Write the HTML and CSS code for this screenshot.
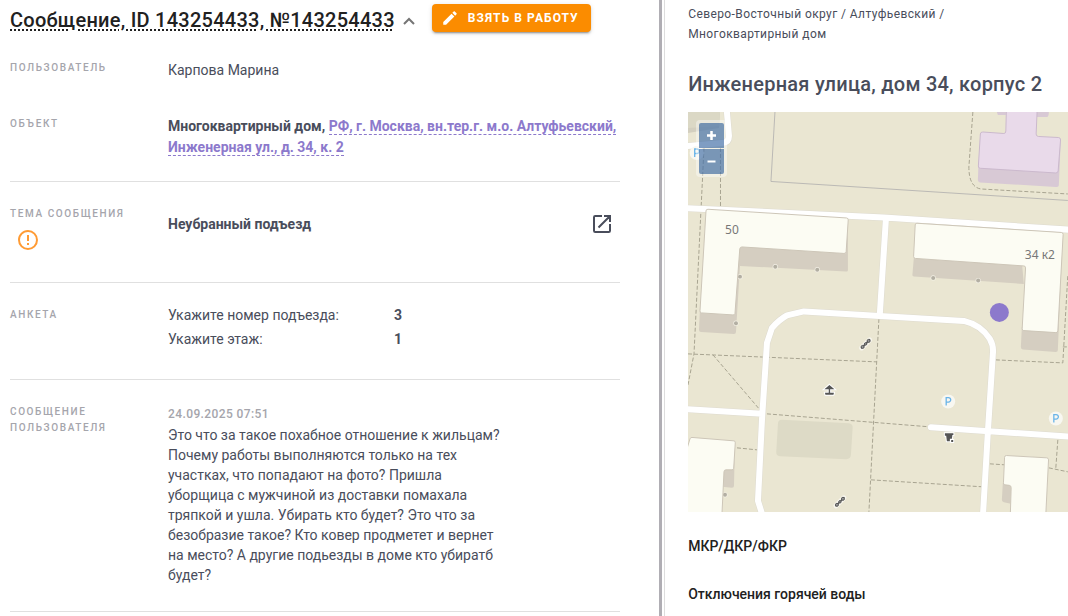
FILE: index.html
```html
<!DOCTYPE html>
<html lang="ru">
<head>
<meta charset="utf-8">
<meta name="viewport" content="width=device-width, initial-scale=1">
<title>Сообщение, ID 143254433</title>
<link rel="stylesheet" href="styles.css">
</head>
<body>
<div class="layout">
  <main class="message">
    <header class="message-head">
      <h1 class="message-title">Сообщение, ID 143254433, №143254433</h1>
      <button class="collapse" type="button" aria-label="Свернуть">
        <svg width="12" height="8" viewBox="0 0 12 8"><path d="M1 7 6 2l5 5" fill="none" stroke="currentColor" stroke-width="2"/></svg>
      </button>
      <button class="take" type="button">
        <svg width="18" height="18" viewBox="0 0 24 24" aria-hidden="true"><path fill="currentColor" d="M20.71 7.04c.39-.39.39-1.04 0-1.41l-2.34-2.34c-.37-.39-1.02-.39-1.41 0l-1.84 1.83 3.75 3.75M3 17.25V21h3.75L17.81 9.93l-3.75-3.75L3 17.25Z"/></svg>
        <span>Взять в работу</span>
      </button>
    </header>

    <dl class="fields">
      <div class="row row-user">
        <dt class="label">Пользователь</dt>
        <dd class="value">Карпова Марина</dd>
      </div>
      <div class="row row-object">
        <dt class="label">Объект</dt>
        <dd class="value object">Многоквартирный дом, <a class="address" href="#map">РФ, г. Москва, вн.тер.г. м.о. Алтуфьевский, Инженерная ул., д. 34, к. 2</a></dd>
      </div>
      <div class="row row-topic">
        <dt class="label">Тема сообщения
          <svg class="alert" width="24" height="24" viewBox="0 0 24 24" role="img" aria-label="Внимание"><path fill="currentColor" d="M11 15h2v2h-2v-2m0-8h2v6h-2V7m1-5C6.47 2 2 6.5 2 12a10 10 0 0 0 10 10 10 10 0 0 0 10-10A10 10 0 0 0 12 2m0 18a8 8 0 0 1-8-8 8 8 0 0 1 8-8 8 8 0 0 1 8 8 8 8 0 0 1-8 8Z"/></svg>
        </dt>
        <dd class="value topic"><span>Неубранный подъезд</span>
          <button class="open" type="button" aria-label="Открыть">
            <svg width="20" height="20" viewBox="0 0 20 20"><path d="M10 2H3.2Q2 2 2 3.200V16.800Q2 18 3.200 18H16.800Q18 18 18 16.800V10M12 2h6v6M18 2 6.500 13.500" fill="none" stroke="currentColor" stroke-width="2"/></svg>
          </button>
        </dd>
      </div>
      <div class="row row-form">
        <dt class="label">Анкета</dt>
        <dd class="value">
          <table class="answers">
            <tr><th scope="row">Укажите номер подъезда:</th><td>3</td></tr>
            <tr><th scope="row">Укажите этаж:</th><td>1</td></tr>
          </table>
        </dd>
      </div>
      <div class="row row-text">
        <dt class="label">Сообщение пользователя</dt>
        <dd class="value">
          <time class="date" datetime="2025-09-24T07:51">24.09.2025 07:51</time>
          <p class="text">Это что за такое похабное отношение к жильцам? Почему работы выполняются только на тех участках, что попадают на фото? Пришла уборщица с мужчиной из доставки помахала тряпкой и ушла. Убирать кто будет? Это что за безобразие такое? Кто ковер продметет и вернет на место? А другие подьезды в доме кто убиратб будет?</p>
        </dd>
      </div>
    </dl>
  </main>

  <aside class="place">
    <p class="crumbs">Северо-Восточный округ / Алтуфьевский / Многоквартирный дом</p>
    <h2 class="place-title">Инженерная улица, дом 34, корпус 2</h2>
    <div class="map" id="map">
      <svg class="map-canvas" viewBox="0 0 380 400" preserveAspectRatio="xMinYMin slice" role="img" aria-label="Карта">
        <defs>
          <g id="parking"><circle r="7" fill="#f8f7f1"/><path d="M-2 4v-8h2.300a2.200 2.200 0 0 1 0 4.500H-2" fill="none" stroke="#6ab4e8" stroke-width="1.300"/></g>
          <g id="seesaw"><path d="M-4 4 4-4" stroke="#f8f6ee" stroke-width="5" stroke-linecap="round"/><path d="M-4.500 4.500 4.500-4.500" stroke="#555" stroke-width="1.500"/><g fill="#999" stroke="#555"><circle cx="-3" cy="3" r="1.500"/><circle cx="0" cy="0" r="1.200"/><circle cx="3" cy="-3" r="1.500"/></g></g>
          <g id="door"><circle r="2.600" fill="#f4f1e6"/><circle r="2" fill="#b3afa3"/></g>
        </defs>
        <path d="M0 0h32l-1 16-31 5Z" fill="#d3cfbf"/>
        <path d="M0 0h32l-1 14-31 2Z" fill="#dbd8c5"/>
        <path d="M94 308 161 311.500Q165 312 164.700 316L163 343Q162.600 347.500 158 347.300L92 344.500Q88 344 88.300 340L90 312Q90 308 94 308Z" fill="#dddac6"/>
        <g class="paths">
          <path d="M16 36 6 242 0 273M32.500 36V95M285 0 281 55Q281 75 293 77L380 82M0 242 189 250M25 243 72 298M79 302 242 315M191 207 181 400M183 368 295 375M49 336 69 338M308 248 375 251 380 163M375 235H380M302 352 317 353M361 356 380 360M370 328 368 356"/>
        </g>
        <path d="M87 0 83 69.500 380 88.500" fill="none" stroke="#bbb9b5"/>
        <g class="roads roads-edge"><path d="M38.500-5 41 24Q41 31 34 31L-5 34.500M-5 96 196 105.500 385 118M198 107 192 201M75 405 70 389 74 308 79 231 84 216Q91 208 99 203.500L116 199.500 276 209Q293 213 302 227Q306 234 305 242L300 320 295 405M-5 297 74 302M243 315.500 385 325"/></g>
        <g class="roads"><path d="M38.500-5 41 24Q41 31 34 31L-5 34.500M-5 96 196 105.500 385 118M198 107 192 201M75 405 70 389 74 308 79 231 84 216Q91 208 99 203.500L116 199.500 276 209Q293 213 302 227Q306 234 305 242L300 320 295 405M-5 297 74 302M243 315.500 385 325"/></g>
        <g class="shade">
          <path d="M160 107V158Q160 160 158 159.600L52 154 48 220Q48 222 46 222L13 220Q11 220 11 218L12 195 50 130Z"/>
          <path d="M226 145 224.500 163Q224.500 164.500 226 164.500L336 172 334 150ZM334 215 333 235Q333 237 335 237.500L368 240Q370 240 370 238L375 122 368 200Z"/>
          <path d="M47 330 46 374Q46 376 44 376L34 375 35 356ZM315 371 314 388Q314 390 316 390.500L323 392V373Z"/>
        </g>
        <use href="#door" x="52" y="164.700"/><use href="#door" x="48" y="211.300"/><use href="#door" x="37" y="383"/>
        <g class="shade-pink"><path d="M290.500 55 290 68Q290 70 292 70.500L368 75Q371 75 371 73L373 27 366 52ZM309 0 310 3H318V0ZM349 0V5H359Q361 5 361 0Z"/></g>
        <path d="M318.500-2 318 19Q318 21.500 316 21.500L295 20Q292.500 20 292.500 22L290.500 54Q290 56 292.500 56.300L368 61Q370 61 370.300 59L372.700 28Q373 25.700 370.500 25.500L350.500 24.500Q348 24 348.300 22L349.300-2Z" fill="#e9daea" stroke="#cbb9cd"/>
        <g class="houses">
          <path d="M20 97.300 158.500 106Q160.500 106.200 160.300 108L158.200 140Q158 141.500 156 141.500L54 135Q52 135 51.800 137L47 201.500Q46.700 203.200 45 203L13.500 201Q12 201 12 199L18 99Q18 97.300 20 97.300Z"/>
          <path d="M229 111.300 373.500 120.500Q375.300 120.700 375.300 122.500L370 219Q370 220.800 368 220.700L336 218.700Q334.300 218.700 334.300 217L337.700 156Q337.700 154 336 154L227.500 146.500Q225.700 146.300 225.700 144.500L227.300 113Q227.300 111.300 229 111.300Z"/>
          <path d="M-2 402V340L2 327Q2.500 325.500 4 325.600L46 329Q47.500 329.200 47.300 331L45.700 356.500Q45.500 358 44 358H38Q36 358 36 360L34 402Z"/>
          <path d="M318.500 343.700 359 346Q360.700 346.200 360.700 348L358 402H322.500L323.300 376Q323.300 373.700 321.500 373.500L317 373Q315.500 373 315.600 371L316.700 345.500Q316.700 343.700 318.500 343.700Z"/>
        </g>
        <use href="#door" x="87.300" y="154.700"/><use href="#door" x="129.300" y="157.700"/><use href="#door" x="245.300" y="166"/><use href="#door" x="290.300" y="168.700"/>
        <use href="#parking" x="8.700" y="41"/><use href="#parking" x="260.300" y="289.700"/><use href="#parking" x="368" y="306.700"/>
        <use href="#seesaw" x="177.700" y="232"/><use href="#seesaw" x="152" y="390"/>
        <path d="M141.500 273 146.500 277.500H142.200V281H146L145.500 283H137.500L137 281H140.800V277.500H136.500Z" fill="#555" stroke="#fff" stroke-width="2" paint-order="stroke"/>
        <path d="M257 321.500H265.500V323.200H264.500L264 327H262V329.500H259L258.300 323.800H257ZM263.300 328.200h2v2h-2Z" fill="#555" stroke="#fff" stroke-width="2" paint-order="stroke"/>
        <text class="map-label" x="44" y="122" text-anchor="middle">50</text>
        <text class="map-label" x="352" y="147" text-anchor="middle">34 к2</text>
        <circle cx="311.500" cy="200.500" r="9.500" fill="#8c79cc"/>
      </svg>
      <div class="zoom">
        <button class="zoom-button zoom-in" type="button" aria-label="Приблизить"><svg width="11" height="11" viewBox="0 0 11 11"><path d="M1 5.500h9M5.500 1v9" stroke="currentColor" stroke-width="2.500"/></svg></button>
        <button class="zoom-button zoom-out" type="button" aria-label="Отдалить"><svg width="11" height="11" viewBox="0 0 11 11"><path d="M1.500 5.500h8" stroke="currentColor" stroke-width="2"/></svg></button>
      </div>
    </div>
    <h3 class="section">МКР/ДКР/ФКР</h3>
    <h3 class="section">Отключения горячей воды</h3>
  </aside>
</div>
</body>
</html>
```
FILE: styles.css
```css
* { box-sizing: border-box; }
body {
  margin: 0;
  background: #fff;
  color: #494d5b;
  font: 400 14px/20px Roboto, sans-serif;
}
h1, h2, h3, p, dl, dd { margin: 0; }
button { padding: 0; border: 0; background: none; font: inherit; cursor: pointer; }
svg { display: block; }

.layout {
  display: grid;
  grid-template-columns: minmax(0, 1fr) 38%;
  min-height: 100vh;
}
.message {
  padding: 4px 39px 0 10px;
  border-right: 3px solid #b0aeb4;
}
.message-head { display: flex; align-items: center; }
.message-title {
  padding-top: 4px;
  color: #212121;
  font-size: 20px;
  line-height: 24px;
  font-weight: 500;
  letter-spacing: 0.0125em;
  text-decoration: underline dotted 2px;
  text-underline-offset: 2px;
  white-space: nowrap;
}
.collapse { padding: 6px 0 0 8px; color: #757575; }
.take {
  display: flex;
  align-items: center;
  gap: 9px;
  height: 28px;
  margin-left: 17px;
  padding: 0 12px 0 9px;
  border-radius: 4px;
  background: #fb8c00;
  box-shadow: 0 3px 1px -2px rgba(0, 0, 0, .2), 0 2px 2px rgba(0, 0, 0, .14), 0 1px 5px rgba(0, 0, 0, .12);
  color: #fff;
  font-size: 12px;
  font-weight: 700;
  letter-spacing: 0.0892857em;
  text-transform: uppercase;
  white-space: nowrap;
}

.row {
  display: grid;
  grid-template-columns: 158px minmax(0, 1fr);
}
.row + .row + .row { border-top: 1px solid #e0e0e0; }
.row-user { padding-top: 28px; }
.row-object { padding: 36px 0 23px; }
.row-topic { padding: 24px 0 30px; }
.row-form { padding: 20px 0 28px; }
.row-form .label { padding-top: 4px; }
.row-text { padding: 24px 0 26px; border-bottom: 1px solid #e0e0e0; }
.label {
  color: #a5a5ac;
  font-size: 10px;
  line-height: 16px;
  font-weight: 500;
  letter-spacing: 0.16em;
  text-transform: uppercase;
}
.alert { margin: 6px 0 0 6px; color: #ff9b34; }
.object { font-weight: 700; line-height: 21px; }
.address {
  border-bottom: 1px dashed #8c79cc;
  color: #8c79cc;
  text-decoration: none;
}
.topic {
  display: flex;
  align-items: flex-start;
  justify-content: space-between;
  padding: 8px 8px 0 0;
  font-weight: 700;
}
.open { color: #494d5b; }
.answers { border-collapse: collapse; line-height: 24px; }
.answers th { width: 226px; padding: 0; font-weight: 400; text-align: left; }
.answers td { padding: 0; font-weight: 700; }
.date {
  display: block;
  margin-bottom: 1px;
  color: #a5a5ac;
  font-size: 12px;
  font-weight: 500;
  letter-spacing: 0.0333em;
}
.text { max-width: 336px; }

.place {
  margin-left: 2px;
  padding: 4px 0 0 23px;
  border-left: 1px solid #ddd;
}
.crumbs {
  max-width: 280px;
  font-size: 12px;
  letter-spacing: 0.0333em;
}
.place-title {
  margin: 28px 0 16px;
  font-size: 20px;
  line-height: 24px;
  font-weight: 500;
  letter-spacing: 0.0125em;
}
.map {
  position: relative;
  background: #eae6d2;
  overflow: hidden;
}
.map-canvas { width: 100%; }
.paths { fill: none; stroke: #a8a491; stroke-width: 1; stroke-dasharray: 4 2; }
.roads { fill: none; stroke: #fff; stroke-width: 6; stroke-linecap: round; stroke-linejoin: round; }
.roads-edge { stroke: #dedbd0; stroke-width: 7; }
.shade { fill: #d5cec1; }
.shade-pink { fill: #d8c9d5; }
.houses { fill: #fcfcf3; stroke: #cdc6b8; stroke-width: 1; }
.map-label { fill: #777; font: 400 12px "Noto Sans", sans-serif; }
.zoom {
  position: absolute;
  top: 8px;
  left: 8px;
  display: grid;
  gap: 1px;
  padding: 3px;
  border-radius: 4px;
  background: rgba(255, 255, 255, .4);
}
.zoom-button {
  display: grid;
  place-items: center;
  width: 25px;
  height: 25px;
  background: rgba(0, 60, 136, .5);
  color: #fff;
}
.zoom-in { border-radius: 2px 2px 0 0; }
.zoom-out { border-radius: 0 0 2px 2px; }
.section {
  margin-top: 24px;
  color: #212121;
  font-size: 14px;
  font-weight: 500;
}
.section + .section { margin-top: 28px; }
```
